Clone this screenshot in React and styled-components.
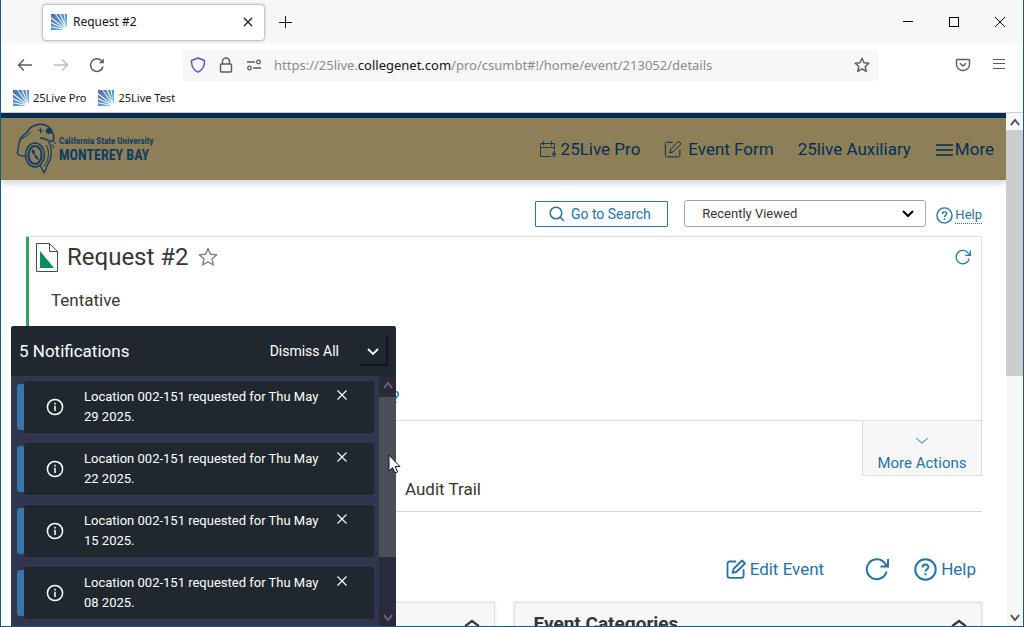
import React from "react";
import styled, { createGlobalStyle } from "styled-components";

const Global = createGlobalStyle`
  *, *::before, *::after { box-sizing: border-box; }
  body { margin: 0; font-family: Roboto, "Liberation Sans", sans-serif; color: #363636; }
  button, select, input { font: inherit; color: inherit; }
  button { background: none; border: 0; padding: 0; cursor: pointer; }
  a { color: inherit; text-decoration: none; }
  h1, h2, p, ul { margin: 0; padding: 0; font-weight: 400; }
  ul { list-style: none; }
  svg { display: block; flex: none; }
`;

const Window = styled.div`
  position: relative;
  display: flex;
  flex-direction: column;
  height: 100vh;
  overflow: hidden;
  background: #fff;
  border: 1px solid #1d5a78;
  border-top: 0;
`;

const TabStrip = styled.div`
  display: flex;
  align-items: center;
  flex: none;
  height: 44px;
  padding-left: 41px;
  background: #f7f7f7;
  font: 12px/16px "Noto Sans", sans-serif;
  color: #15141a;
`;

const Tab = styled.div`
  display: flex;
  align-items: center;
  gap: 6px;
  width: 223px;
  height: 37px;
  padding: 0 8px;
  background: #fff;
  border: 1px solid #c4c4c8;
  border-radius: 4px;
  box-shadow: 0 0 3px rgba(0, 0, 0, 0.2);
`;

const TabTitle = styled.span`
  flex: 1;
`;

const IconButton = styled.button`
  display: flex;
  align-items: center;
  justify-content: center;
  flex: none;
  width: ${(p) => p.$size || 16}px;
  height: ${(p) => p.$size || 16}px;
  color: ${(p) => p.$color || "inherit"};
`;

const NewTab = styled(IconButton)`
  margin-left: 11px;
`;

const WindowControls = styled.div`
  display: flex;
  gap: 30px;
  margin-left: auto;
  padding-right: 15px;
  color: #000;
`;

const NavBar = styled.div`
  display: flex;
  align-items: center;
  flex: none;
  height: 42px;
  padding: 0 16px;
  color: #5b5b66;
`;

const NavButtons = styled.div`
  display: flex;
  gap: 20px;
  width: 165px;
`;

const UrlBox = styled.div`
  display: flex;
  align-items: center;
  gap: 12px;
  flex: 0 1 696px;
  height: 32px;
  padding: 0 8px;
  background: #f7f7f7;
  border-radius: 3px;
`;

const UrlText = styled.span`
  flex: 1;
  font: 13px/20px "Noto Sans", sans-serif;
  color: #8a8a90;
`;

const UrlHost = styled.span`
  color: #15141a;
`;

const NavEnd = styled.div`
  display: flex;
  gap: 20px;
  margin-left: auto;
`;

const Bookmarks = styled.div`
  display: flex;
  align-items: flex-start;
  gap: 12px;
  flex: none;
  height: 27px;
  padding: 4px 12px 0;
  border-bottom: 1px solid #cdccd2;
  font: 11px/16px "Noto Sans", sans-serif;
  color: #15141a;
`;

const Bookmark = styled.a`
  display: flex;
  align-items: center;
  gap: 4px;
`;

const Viewport = styled.div`
  display: flex;
  flex: 1;
  min-height: 0;
`;

const Page = styled.div`
  flex: 1;
  min-width: 0;
  overflow: hidden;
`;

const SiteHeader = styled.header`
  display: flex;
  align-items: center;
  justify-content: space-between;
  height: 67px;
  padding: 0 12px 0 15px;
  background: #8e7f57;
  border-top: 5px solid #002f51;
  box-shadow: 0 4px 6px rgba(40, 40, 110, 0.18);
  color: #00305a;
`;

const Logo = styled.a`
  display: flex;
  align-items: center;
  gap: 3px;
  color: #113c62;
  font-family: "Roboto Condensed", "Open Sans Condensed", "Noto Sans Condensed", "Liberation Sans Narrow", Roboto, sans-serif;
  font-weight: 700;
`;

const LogoSmall = styled.span`
  display: block;
  font-size: 9px;
  line-height: 12px;
`;

const LogoBig = styled.span`
  display: block;
  font-size: 14px;
  line-height: 17px;
`;

const SiteNav = styled.nav`
  display: flex;
  align-items: center;
  gap: 24px;
  font-size: 17px;
  line-height: 24px;
`;

const NavLink = styled.a`
  display: flex;
  align-items: center;
  gap: ${(p) => p.$gap || 0}px;
`;

const MoreButton = styled.button`
  display: flex;
  align-items: center;
  gap: 2px;
`;

const Main = styled.main`
  padding: 20px 24px 0 25px;
`;

const SearchRow = styled.div`
  display: flex;
  align-items: flex-start;
  justify-content: flex-end;
  height: 36px;
`;

const SearchButton = styled.button`
  display: flex;
  align-items: center;
  justify-content: center;
  gap: 6px;
  width: 133px;
  height: 26px;
  margin: 1px 16px 0 0;
  padding-right: 4px;
  border: 1px solid #2573a7;
  border-radius: 1px;
  color: #2573a7;
  font-size: 14px;
`;

const SelectWrap = styled.label`
  position: relative;
  width: 242px;
  margin-right: 10px;
`;

const SelectIcon = styled.span`
  position: absolute;
  right: 12px;
  top: 10px;
  pointer-events: none;
  color: #000;
`;

const Select = styled.select`
  appearance: none;
  display: block;
  width: 100%;
  height: 27px;
  padding: 0 30px 0 17px;
  border: 1px solid #a6a6a6;
  border-radius: 3px;
  background: #fff;
  font-size: 13px;
`;

const HelpLink = styled.a`
  display: flex;
  align-items: center;
  gap: ${(p) => (p.$large ? 4 : 2)}px;
  color: #2573a7;
  font-size: ${(p) => (p.$large ? 17 : 13)}px;
  line-height: ${(p) => (p.$large ? 24 : 16)}px;
  margin-top: ${(p) => (p.$large ? 0 : 7)}px;
`;

const Dotted = styled.span`
  border-bottom: 1px dotted #2573a7;
`;

const EventCard = styled.section`
  display: flex;
  flex-direction: column;
  height: 185px;
  border: 1px solid #dcdcdc;
  border-left: 3px solid #35a35c;
  border-radius: 2px 2px 0 0;
`;

const CardTop = styled.div`
  display: flex;
  align-items: center;
  gap: 9px;
  height: 40px;
  padding: 0 10px 0 7px;
`;

const EventTitle = styled.h1`
  font-size: 24px;
  line-height: 32px;
`;

const CardRefresh = styled(IconButton)`
  margin-left: auto;
`;

const Status = styled.p`
  padding: 11px 0 0 22px;
  font-size: 17px;
  line-height: 24px;
`;

const CardHelp = styled.p`
  padding: 74px 0 0 363px;
  color: #2573a7;
  font-size: 16px;
  line-height: 24px;
`;

const ActionsRow = styled.div`
  display: flex;
  justify-content: flex-end;
`;

const MoreActions = styled.button`
  display: flex;
  flex-direction: column;
  align-items: center;
  gap: 8px;
  width: 120px;
  height: 55px;
  padding-top: 16px;
  background: #f7f7f7;
  border: 1px solid #dcdcdc;
  border-top: 0;
  color: #2573a7;
  font-size: 15px;
  line-height: 20px;
`;

const Tabs = styled.div`
  display: flex;
  height: 36px;
  padding-left: 379px;
  border-bottom: 1px solid #d4d4d4;
  font-size: 17px;
  line-height: 26px;
`;

const EventTools = styled.div`
  display: flex;
  align-items: center;
  justify-content: flex-end;
  height: 90px;
  padding: 24px 6px 0 0;
  color: #2573a7;
`;

const EditEvent = styled.button`
  display: flex;
  align-items: center;
  gap: 4px;
  font-size: 17px;
  line-height: 24px;
`;

const RefreshTool = styled(IconButton)`
  margin: 0 25px 0 41px;
`;

const Panels = styled.div`
  display: grid;
  grid-template-columns: 1fr 1fr;
  gap: 19px;
`;

const Panel = styled.section`
  display: flex;
  justify-content: space-between;
  padding: 10px 14px 10px 19px;
  background: #f7f7f7;
  border: 1px solid #dcdcdc;
  border-radius: 2px;
  box-shadow: 0 0 0 2px #f8f8f8;
`;

const PanelTitle = styled.h2`
  font-size: 19px;
  line-height: 22px;
  font-weight: 700;
`;

const PanelToggle = styled(IconButton)`
  margin-left: auto;
  height: 20px;
`;

const ScrollBar = styled.div`
  display: flex;
  flex-direction: column;
  flex: none;
  width: 17px;
  background: #f7f7f7;
  color: #505050;
`;

const ScrollArrow = styled.span`
  display: flex;
  align-items: center;
  justify-content: center;
  height: 17px;
`;

const ScrollTrack = styled.div`
  flex: 1;
`;

const ScrollThumb = styled.div`
  height: ${(p) => p.$share}%;
  margin-top: ${(p) => p.$offset || 0}px;
  background: ${(p) => p.$color || "#cdcdcd"};
`;

const Notices = styled.aside`
  position: absolute;
  left: 10px;
  bottom: 0;
  display: flex;
  flex-direction: column;
  width: 385px;
  height: 300px;
  background: #30364e;
  border-radius: 3px 3px 0 0;
  overflow: hidden;
  color: #fff;
`;

const NoticesHead = styled.div`
  display: flex;
  align-items: center;
  flex: none;
  height: 50px;
  padding: 0 8px;
  background: #20282f;
`;

const NoticesTitle = styled.h2`
  flex: 1;
  font-size: 17px;
  line-height: 24px;
`;

const DismissAll = styled.button`
  margin-right: 21px;
  font-size: 14px;
`;

const Collapse = styled(IconButton)`
  height: 30px;
  padding-top: 4px;
  border-right: 2px solid #14151f;
  border-bottom: 2px solid #14151f;
  border-radius: 2px;
`;

const NoticesBody = styled.div`
  display: flex;
  flex: 1;
  min-height: 0;
`;

const NoticeList = styled.ul`
  flex: 1;
  display: flex;
  flex-direction: column;
  gap: 10px;
  padding: 5px 5px 0 6px;
`;

const Notice = styled.li`
  display: flex;
  align-items: center;
  flex: none;
  height: 52px;
`;

const NoticeMark = styled.span`
  width: 7px;
  height: 46px;
  background: #3876a8;
  border-radius: 3px 0 0 3px;
`;

const NoticeCard = styled.div`
  display: flex;
  align-items: center;
  flex: 1;
  height: 52px;
  padding: 0 24px 0 22px;
  background: #20282f;
  border-radius: 3px;
`;

const NoticeText = styled.p`
  flex: 1;
  padding: 0 10px 0 20px;
  font-size: 13px;
  line-height: 20px;
`;

const NoticeClose = styled(IconButton)`
  align-self: flex-start;
  margin-top: 6px;
`;

const DarkScroll = styled(ScrollBar)`
  background: #282d3f;
  color: #66667a;
`;

const DarkArrow = styled(ScrollArrow)`
  background: #2b2838;
`;

const Cursor = styled.span`
  position: absolute;
  left: 387px;
  top: 454px;
`;

function Stroke({ w = 16, h, box, sw = 1, children, ...rest }) {
  return (
    <svg width={w} height={h || w} viewBox={box || `0 0 ${w} ${h || w}`} fill="none" stroke="currentColor" strokeWidth={sw} aria-hidden="true" {...rest}>
      {children}
    </svg>
  );
}

function Favicon() {
  return (
    <svg width="16" height="16" viewBox="0 0 16 16" aria-hidden="true">
      <defs>
        <linearGradient id="fav" x1="0" y1="0" x2="1" y2="1">
          <stop offset="0" stopColor="#4f68a6" />
          <stop offset="0.55" stopColor="#5a96cb" />
          <stop offset="1" stopColor="#8ed0ee" />
        </linearGradient>
      </defs>
      <path
        fill="url(#fav)"
        d="M0 0H4L14 14L0 3ZM5 0H8.5L14.5 13ZM9.7 0H12.5L15 12ZM13.7 0H16V13H15.2ZM0 4.5L13.5 14.5L0 8ZM0 9.2L13 15L0 12.2ZM0 13.3L12 15.5V16H0Z"
      />
    </svg>
  );
}

const X = ({ w = 16, sw = 1, r = 4 }) => (
  <Stroke w={w} sw={sw}>
    <path d={`M${w / 2 - r} ${w / 2 - r}L${w / 2 + r} ${w / 2 + r}M${w / 2 + r} ${w / 2 - r}L${w / 2 - r} ${w / 2 + r}`} />
  </Stroke>
);

const Chevron = ({ w = 12, sw = 2, up, ...rest }) => (
  <Stroke w={w} h={8} box="0 0 12 8" sw={sw} preserveAspectRatio="none" {...rest}>
    <path d={up ? "M1 7L6 2L11 7" : "M1 1L6 6L11 1"} />
  </Stroke>
);

const Star = ({ w, sw = 1.4 }) => (
  <Stroke w={w} box="0 0 20 20" sw={sw} strokeLinejoin="round">
    <path d="M10 1.6L12.5 7.2L18.6 7.8L14 11.9L15.3 18L10 14.8L4.7 18L6 11.9L1.4 7.8L7.5 7.2Z" />
  </Stroke>
);

const Edit = ({ w, sw }) => (
  <Stroke w={w} box="0 0 20 20" sw={sw} strokeLinejoin="round" strokeLinecap="round">
    <path d="M9.5 2.5H3.5C2.2 2.5 1.5 3.3 1.5 4.5V16.5C1.5 18 2.2 18.8 3.5 18.8H15.5C17 18.8 17.6 18 17.6 16.8V11" />
    <path d="M6.5 13.8L7.5 10L16 1.5L19 4.5L10.3 13Z" />
  </Stroke>
);

const HelpIcon = ({ w, sw }) => (
  <Stroke w={w} box="0 0 22 22" sw={sw}>
    <circle cx="11" cy="11" r="9.8" />
    <path d="M8.2 9C8.2 5.4 13.8 5.4 13.8 8.7C13.8 10.8 11 10.8 11 13M11 14.6V16.4" />
  </Stroke>
);

const Refresh = ({ w, sw }) => (
  <Stroke w={w} box="0 0 24 24" sw={sw}>
    <path d="M21.5 14.5A10 10 0 1 1 20 6.5L22.5 9M23 2V9.5H15.5" />
  </Stroke>
);

const OtterMark = () => (
  <Stroke w={40} h={52} sw={1.5} strokeLinejoin="round">
    <path d="M9 33C6 33 1.5 33 1.3 30C2.5 27 2 22 4 17C6 12 9 12 11 9C14 4 19 1.5 24 1.2C31 1 35 5 37 10.5C38.5 15 38 18 35 18.5C31 17 29 15 24 15" />
    <path d="M4 16.5C8 15 12 12.5 15 9" strokeWidth="1" />
    <path d="M32.5 19C36.5 25 36 35 32 41L28 50L24.5 43" strokeWidth="1.3" />
    <path d="M30 22C34 28 33 37 28 44" strokeWidth="1" />
    <path d="M22 7L27 8M24.5 5V10M36 21L38 25M37 18L40 21" strokeWidth="1" />
    <ellipse cx="33" cy="8" rx="3.2" ry="3" fill="currentColor" stroke="none" />
    <ellipse cx="19" cy="32" rx="9.4" ry="12" />
    <ellipse cx="19" cy="32" rx="6.6" ry="9" strokeWidth="2" />
    <path d="M16 26L19 28L18.5 31L21 33L23 37L20 36L18 32L15.5 29Z" fill="currentColor" stroke="none" />
  </Stroke>
);

const notices = ["29", "22", "15", "08"];

export default function App() {
  return (
    <Window>
      <Global />
      <TabStrip>
        <Tab>
          <Favicon />
          <TabTitle>Request #2</TabTitle>
          <IconButton aria-label="Close tab"><X r={4} sw={1.2} /></IconButton>
        </Tab>
        <NewTab aria-label="New tab" $size={18}><Stroke w={14}><path d="M7.5 1V13M1 7.5H14" /></Stroke></NewTab>
        <WindowControls>
          <IconButton aria-label="Minimize"><Stroke shapeRendering="crispEdges"><path d="M3 7.5H13" /></Stroke></IconButton>
          <IconButton aria-label="Maximize"><Stroke><rect x="3.5" y="3.5" width="9" height="9" /></Stroke></IconButton>
          <IconButton aria-label="Close"><X r={5} /></IconButton>
        </WindowControls>
      </TabStrip>
      <NavBar>
        <NavButtons>
          <IconButton aria-label="Back"><Stroke sw={1.4}><path d="M15 8H1.5M7 2.5L1.5 8L7 13.5" /></Stroke></IconButton>
          <IconButton aria-label="Forward" $color="#bdbdc2"><Stroke sw={1.4}><path d="M1 8H14.5M9 2.5L14.5 8L9 13.5" /></Stroke></IconButton>
          <IconButton aria-label="Reload"><Stroke sw={1.5}><path d="M14 9.5A6.3 6.3 0 1 1 12.5 3.8" /><path d="M14.8 1.2V6.2H9.8Z" fill="currentColor" stroke="none" /></Stroke></IconButton>
        </NavButtons>
        <UrlBox>
          <Stroke sw={1.5} color="#5a55d8"><path d="M8 1L14.5 3.5C14.8 9 12.5 13 8 15.2C3.5 13 1.2 9 1.5 3.5Z" strokeLinejoin="round" /></Stroke>
          <Stroke sw={1.4}><rect x="2.5" y="7" width="11" height="8" rx="1" /><path d="M4.5 7V4.5A3.5 3.5 0 0 1 11.5 4.5V7" /></Stroke>
          <Stroke sw={1.3}><path d="M1 5H9M7 11H15" /><circle cx="12.5" cy="5" r="1.8" /><circle cx="3.5" cy="11" r="1.8" /></Stroke>
          <UrlText>https://25live.<UrlHost>collegenet.com</UrlHost>/pro/csumbt#!/home/event/213052/details</UrlText>
          <IconButton aria-label="Bookmark this page"><Star w={16} sw={1.8} /></IconButton>
        </UrlBox>
        <NavEnd>
          <IconButton aria-label="Save to Pocket"><Stroke sw={1.4}><path d="M2.5 2.5H13.5Q14.5 2.5 14.5 3.5V7.5A6.5 6 0 0 1 1.5 7.5V3.5Q1.5 2.5 2.5 2.5ZM5 6.2L8 9L11 6.2" /></Stroke></IconButton>
          <IconButton aria-label="Menu"><Stroke><path d="M2 2.5H14M2 6.5H14M2 11.5H14" /></Stroke></IconButton>
        </NavEnd>
      </NavBar>
      <Bookmarks>
        <Bookmark href="#pro"><Favicon />25Live Pro</Bookmark>
        <Bookmark href="#test"><Favicon />25Live Test</Bookmark>
      </Bookmarks>

      <Viewport>
        <Page>
          <SiteHeader>
            <Logo href="#home">
              <OtterMark />
              <span>
                <LogoSmall>California State University</LogoSmall>
                <LogoBig>MONTEREY BAY</LogoBig>
              </span>
            </Logo>
            <SiteNav>
              <NavLink href="#live" $gap={4}>
                <Stroke w={18} sw={0.8}><path d="M12 16.5H1.5V3.5H15.5V10M1.5 7.5H15.5M4.5 1V5.5M12.5 1V5.5M15.5 11L13 14.5H15L14.5 17.5L17 13.5H15Z" /></Stroke>
                25Live Pro
              </NavLink>
              <NavLink href="#form" $gap={6}><Edit w={18} sw={1.1} />Event Form</NavLink>
              <NavLink href="#aux">25live Auxiliary</NavLink>
              <MoreButton><Stroke w={18} sw={1.5}><path d="M1 5H18M1 10H18M1 15H18" /></Stroke>More</MoreButton>
            </SiteNav>
          </SiteHeader>
          <Main>
            <SearchRow>
              <SearchButton>
                <Stroke sw={1.5}><circle cx="7" cy="7" r="5.8" /><path d="M11 11L15 15" /></Stroke>
                Go to Search
              </SearchButton>
              <SelectWrap>
                <Select aria-label="Recently Viewed"><option>Recently Viewed</option></Select>
                <SelectIcon><Chevron /></SelectIcon>
              </SelectWrap>
              <HelpLink href="#help"><HelpIcon w={17} sw={1.8} /><Dotted>Help</Dotted></HelpLink>
            </SearchRow>

            <EventCard>
              <CardTop>
                <svg width="22" height="29" viewBox="0 0 22 29" aria-hidden="true">
                  <path d="M0.5 0.5H13.5L21.5 8.5V28.5H0.5Z M13.5 0.5V8.5H21.5" fill="#fff" stroke="#4c4c4c" />
                  <path d="M4 8V25H18Z" fill="#0b8a5a" />
                </svg>
                <EventTitle>Request #2</EventTitle>
                <IconButton aria-label="Add to favorites" $size={20} $color="#808080"><Star w={20} /></IconButton>
                <CardRefresh aria-label="Refresh" $color="#2573a7"><Refresh w={16} sw={1.9} /></CardRefresh>
              </CardTop>
              <Status>Tentative</Status>
              <CardHelp>?</CardHelp>
            </EventCard>
            <ActionsRow>
              <MoreActions><Chevron w={14} sw={1} color="#4b93c4" />More Actions</MoreActions>
            </ActionsRow>
            <Tabs><a href="#audit">Audit Trail</a></Tabs>
            <EventTools>
              <EditEvent><Edit w={20} sw={1.8} />Edit Event</EditEvent>
              <RefreshTool aria-label="Refresh event" $size={24}><Refresh w={24} sw={2} /></RefreshTool>
              <HelpLink href="#event-help" $large><HelpIcon w={23} sw={1.9} />Help</HelpLink>
            </EventTools>
            <Panels>
              <Panel>
                <PanelToggle aria-label="Collapse panel"><Chevron up w={16} /></PanelToggle>
              </Panel>
              <Panel>
                <PanelTitle>Event Categories</PanelTitle>
                <PanelToggle aria-label="Collapse Event Categories"><Chevron up w={16} /></PanelToggle>
              </Panel>
            </Panels>
          </Main>
        </Page>
        <ScrollBar>
          <ScrollArrow><Chevron up w={10} /></ScrollArrow>
          <ScrollTrack><ScrollThumb $share={51.4} /></ScrollTrack>
          <ScrollArrow><Chevron w={10} /></ScrollArrow>
        </ScrollBar>
      </Viewport>

      <Notices>
        <NoticesHead>
          <NoticesTitle>5 Notifications</NoticesTitle>
          <DismissAll>Dismiss All</DismissAll>
          <Collapse aria-label="Collapse notifications" $size={28}><Chevron sw={1.8} /></Collapse>
        </NoticesHead>
        <NoticesBody>
          <NoticeList>
            {notices.map((day) => (
              <Notice key={day}>
                <NoticeMark />
                <NoticeCard>
                  <Stroke w={18} sw={1.5}><circle cx="9" cy="9" r="7.6" /><path d="M9 7.8V13M9 4.8V6.4" /></Stroke>
                  <NoticeText>Location 002-151 requested for Thu May {day} 2025.</NoticeText>
                  <NoticeClose aria-label="Dismiss"><X r={4.5} sw={1.1} /></NoticeClose>
                </NoticeCard>
              </Notice>
            ))}
          </NoticeList>
          <DarkScroll>
            <DarkArrow><Chevron up w={10} /></DarkArrow>
            <ScrollTrack><ScrollThumb $share={74} $offset={4} $color="#495157" /></ScrollTrack>
            <DarkArrow><Chevron w={10} /></DarkArrow>
          </DarkScroll>
        </NoticesBody>
      </Notices>
      <Cursor>
        <svg width="13" height="20" viewBox="0 0 13 20" aria-hidden="true">
          <path d="M1 1V17L4.6 13.6L7 19L9.6 18L7.2 12.6H12Z" fill="#fff" stroke="#111122" />
        </svg>
      </Cursor>
    </Window>
  );
}
